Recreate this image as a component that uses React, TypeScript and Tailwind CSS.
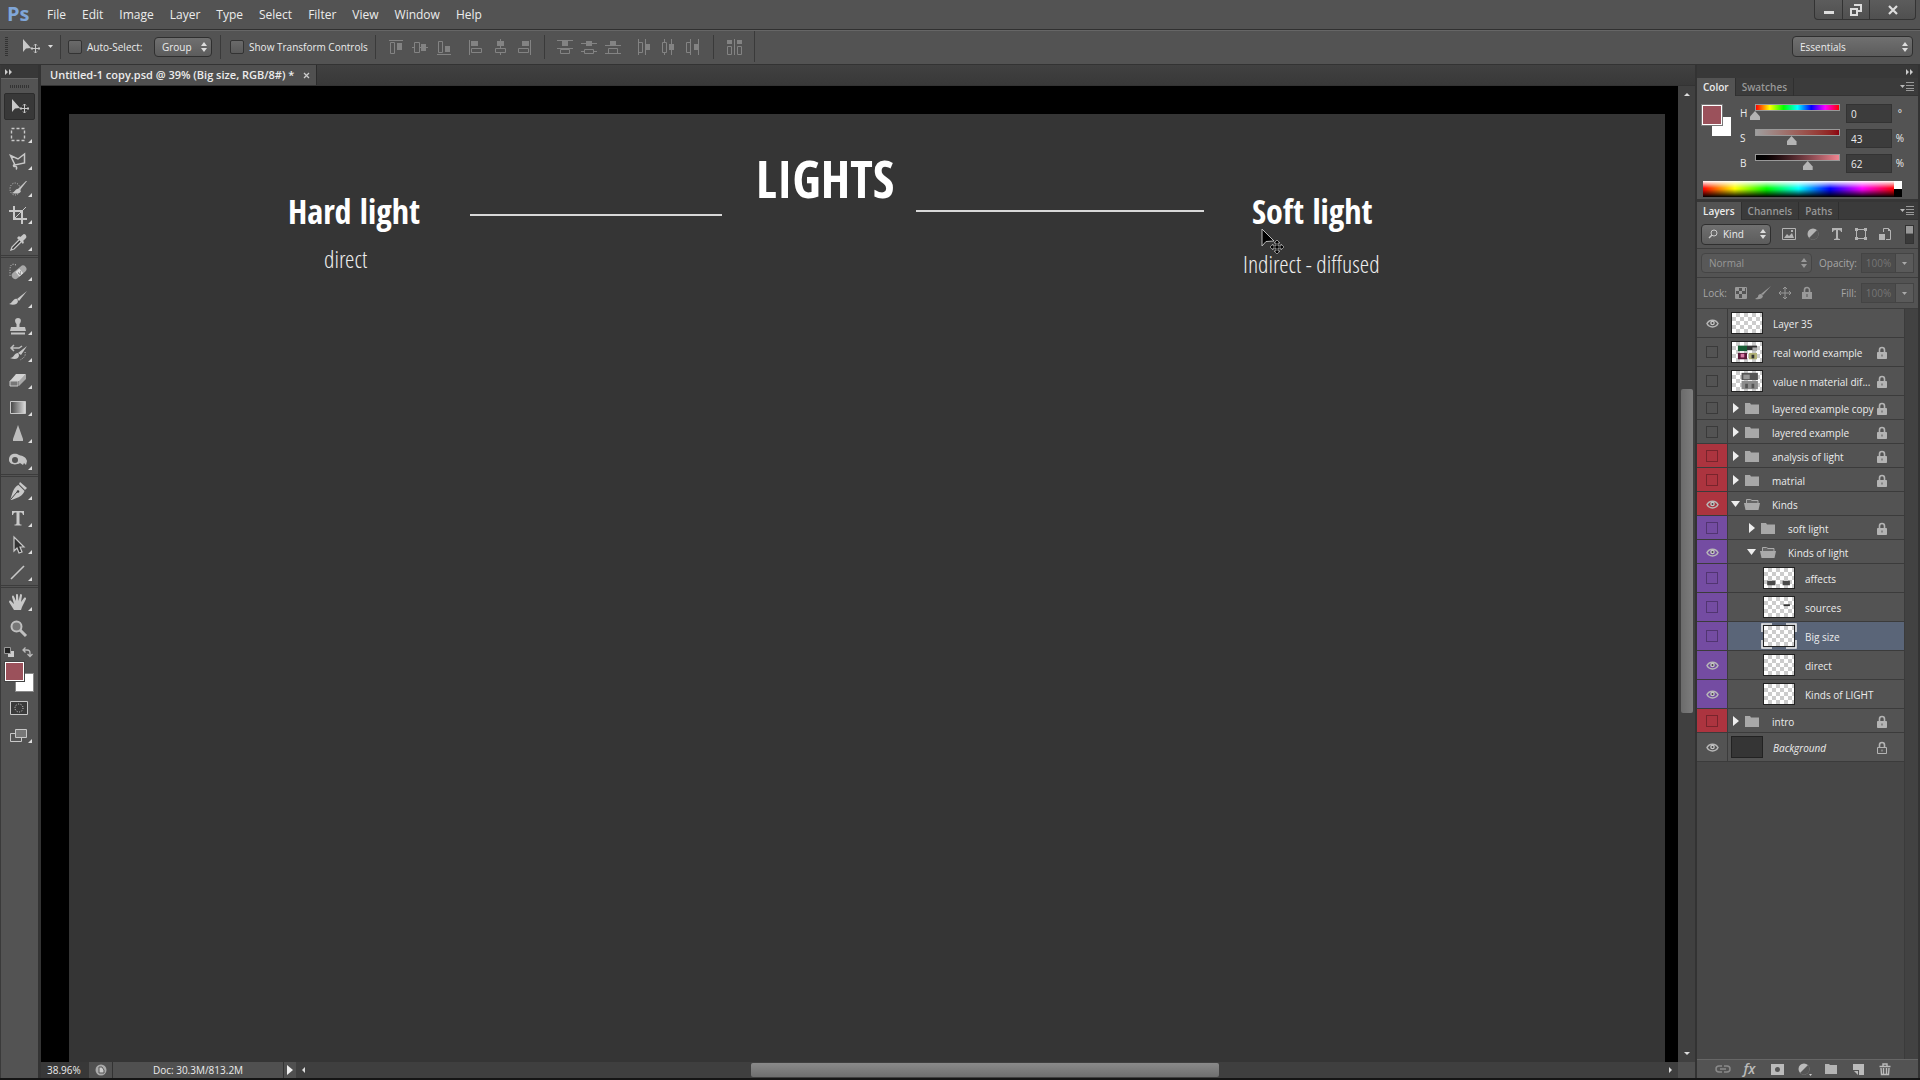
import { ReactNode } from "react";
import { clsx } from "clsx";

type LayerProps = {
  name: string;
  kind: "thumb" | "folder" | "open" | "fill";
  visible?: boolean;
  locked?: boolean;
  nested?: boolean;
  selected?: boolean;
  tag?: "red" | "violet";
  art?: ReactNode;
};

const menus = ["File", "Edit", "Image", "Layer", "Type", "Select", "Filter", "View", "Window", "Help"];

const layers: LayerProps[] = [
  { name: "Layer 35", kind: "thumb", visible: true },
  {
    name: "real world example",
    kind: "thumb",
    locked: true,
    art: (
      <>
        <path d="M5 3h10v6H5z" fill="#155c33" />
        <path d="M15 3h11v5H15z" fill="#333" />
        <path d="M21 5h5v4h-5z" fill="#aaa" />
        <path d="M5 11h10v7H5z" fill="#5b1838" />
        <path d="M8 12h4v4H8z" fill="#d77aa5" />
        <path d="M17 11h9v7h-9z" fill="#b3b277" />
        <path d="M20 13h3v4h-3z" fill="#333" />
      </>
    ),
  },
  {
    name: "value n material dif...",
    kind: "thumb",
    locked: true,
    art: (
      <>
        <path d="M9 1h18v8H9z" fill="#555" />
        <path d="M11 3h7v5h-7z" fill="#999" />
        <path d="M9 10h18v9H9z" fill="#8c8c8c" />
        <path d="M13 13h3v5h-3zM20 13h3v5h-3z" fill="#555" />
      </>
    ),
  },
  { name: "layered example copy", kind: "folder", locked: true },
  { name: "layered example", kind: "folder", locked: true },
  { name: "analysis of light", kind: "folder", locked: true, tag: "red" },
  { name: "matrial", kind: "folder", locked: true, tag: "red" },
  { name: "Kinds", kind: "open", visible: true, tag: "red" },
  { name: "soft light", kind: "folder", locked: true, nested: true, tag: "violet" },
  { name: "Kinds of light", kind: "open", visible: true, nested: true, tag: "violet" },
  {
    name: "affects",
    kind: "thumb",
    nested: true,
    tag: "violet",
    art: <path d="M2 13h9v5H2zM19 13h8v5h-8z" fill="#4a4a4a" />,
  },
  {
    name: "sources",
    kind: "thumb",
    nested: true,
    tag: "violet",
    art: <path d="M20 7h7v2h-7z" fill="#333" />,
  },
  { name: "Big size", kind: "thumb", nested: true, tag: "violet", selected: true },
  { name: "direct", kind: "thumb", visible: true, nested: true, tag: "violet" },
  { name: "Kinds of LIGHT", kind: "thumb", visible: true, nested: true, tag: "violet" },
  { name: "intro", kind: "folder", locked: true, tag: "red" },
  { name: "Background", kind: "fill", visible: true, locked: true },
];

// every tool glyph lives in a 20x20 box
const tools: Record<string, ReactNode> = {
  Move: (
    <>
      <path d="M3 2v13l3-3.5L11 11z" fill="#c8c8c8" />
      <path d="M15.500 7v9M11 11.500h9M14 8.500l1.500-1.500 1.500 1.500M14 14.500l1.500 1.500 1.500-1.500M12.500 10L11 11.500l1.500 1.500M18.500 10l1.500 1.500-1.500 1.500" stroke="#c8c8c8" fill="none" />
    </>
  ),
  Marquee: <path d="M3.500 4.500h13v12h-13z" stroke="#c8c8c8" fill="none" strokeDasharray="3 2" strokeWidth="1.400" />,
  Lasso: (
    <path d="M2.500 4.500L10 8l6.500-5v9L7 14zM7 14c-2-1-2 2 0 1.500s2 2 1 3" stroke="#c8c8c8" fill="none" strokeWidth="1.500" />
  ),
  "Quick Selection": (
    <>
      <ellipse cx="7" cy="11" rx="5" ry="6" stroke="#c8c8c8" fill="none" strokeDasharray="1 1.500" />
      <path d="M19 3l-7 9-2-1 8-8z" fill="#c8c8c8" />
      <path d="M11 11c-3-1-4 3-7 4 4 1 8 1 9-2z" fill="#c8c8c8" />
    </>
  ),
  Crop: (
    <>
      <path d="M6 1v13h13M1 6h13v13" stroke="#c8c8c8" fill="none" strokeWidth="2" />
      <path d="M6 14L18 2" stroke="#c8c8c8" />
    </>
  ),
  Eyedropper: (
    <>
      <path d="M11 8l-7 7-1 3 3-1 7-7" stroke="#c8c8c8" fill="#333" strokeWidth="1.300" />
      <path d="M9 6l6 6 1-2-1-1 3-3c1-1 0-4-2-4-1 0-3 3-4 3l-1-1z" fill="#c8c8c8" />
    </>
  ),
  "Healing Brush": (
    <>
      <path d="M8 3c-4-2-6 0-6 5v6" stroke="#c8c8c8" fill="none" strokeDasharray="1 1.500" />
      <rect x="3" y="7" width="17" height="7" rx="3.500" transform="rotate(-40 11 11)" fill="#a8a8a8" />
      <rect x="9" y="8" width="5" height="6" transform="rotate(-40 11 11)" fill="#ddd" />
      <path d="M10 11h1M12 10h1M11 12h1M12 12h1" stroke="#666" />
    </>
  ),
  Brush: (
    <>
      <path d="M19 2l-8 10-2-2z" fill="#c8c8c8" />
      <path d="M9 10c-4-1-4 4-8 5 5 2 9 0 9-3z" fill="#c8c8c8" />
    </>
  ),
  "Clone Stamp": (
    <path d="M8.500 8C6 5 7 2 10 2s4 3 1.500 6v3H17l1 4H2l1-4h5.500zM3 16.500h14v2H3z" fill="#c4c4c4" />
  ),
  "History Brush": (
    <>
      <path d="M3 5h8l3-2M6 2L3 5l3 3" stroke="#bdbdbd" fill="none" strokeWidth="1.500" />
      <path d="M19 3l-6 9-3-2z" fill="#c8c8c8" />
      <path d="M10 10c-4 0-4 5-8 5 5 2 9 1 9-3z" fill="#c8c8c8" />
      <path d="M17 9c1 4-1 6-5 8" stroke="#c8c8c8" fill="none" strokeDasharray="1 1.500" />
    </>
  ),
  Eraser: (
    <>
      <path d="M2 11l6-7h10l-6 7z" fill="#d2d2d2" />
      <path d="M2 11v5h8v-5z" fill="#777" stroke="#c8c8c8" />
      <path d="M11 11l7-7v5l-7 7z" fill="#a8a8a8" />
    </>
  ),
  Gradient: (
    <>
      <defs>
        <linearGradient id="toolGradient">
          <stop stopColor="#444" />
          <stop offset="1" stopColor="#ddd" />
        </linearGradient>
      </defs>
      <path d="M2.500 4.500h15v12h-15z" fill="url(#toolGradient)" stroke="#c8c8c8" />
    </>
  ),
  Sharpen: <path d="M10 1l5 14v2H5v-2z" fill="#bdbdbd" />,
  Dodge: (
    <path
      fillRule="evenodd"
      d="M1 9c0-7 7-7 10-5 4 1 7 2 8 6l-1 4-2-2-1 2-3-2c-5 3-11 1-11-3zm3 0a3 3 0 006 0 3 3 0 00-6 0z"
      fill="#c4c4c4"
    />
  ),
  Pen: (
    <>
      <path d="M12 1l7 6-2 2-6-6z" fill="#c8c8c8" />
      <path d="M10.500 4l6 6c-2 5-5 6-13 9l-1-1C5 10 6 6 10.500 4z" fill="#c8c8c8" />
      <path d="M3 18l6-7" stroke="#444" />
      <circle cx="10" cy="10.500" r="1.300" fill="#444" />
    </>
  ),
  Type: <path d="M4 3h12v4h-1c-.5-2-1-2.500-3.500-2.500V15c0 1 .5 1.500 2 1.500v1h-7v-1c1.500 0 2-.5 2-1.500V4.500C6 4.500 5.500 5 5 7H4z" fill="#c8c8c8" />,
  "Path Selection": <path d="M6 2v14l3-3 2 5 3-1-2-5h4z" fill="#333" stroke="#c8c8c8" strokeWidth="1.200" />,
  Line: <path d="M3 17L16 4" stroke="#c8c8c8" strokeWidth="1.600" />,
  Hand: (
    <path
      d="M6 18L1 10c0-1 1-2 2-1l3 3-2-7c0-1.500 1.500-2 2-.5L8 9V3c0-1.500 2-1.500 2 0l.5 6L12 3c0-1.500 2-1 2 .5L13 10l3-4c1-1 2.500 0 2 1l-4 8-1 3z"
      fill="#c8c8c8"
    />
  ),
  Zoom: (
    <>
      <circle cx="8.500" cy="7.500" r="5" fill="#777" stroke="#c0c0c0" strokeWidth="2" />
      <path d="M12 11l6 6" stroke="#c0c0c0" strokeWidth="3" />
    </>
  ),
};

const toolGroups = [
  ["Move", "Marquee", "Lasso", "Quick Selection", "Crop", "Eyedropper"],
  ["Healing Brush", "Brush", "Clone Stamp", "History Brush", "Eraser", "Gradient", "Sharpen", "Dodge"],
  ["Pen", "Type", "Path Selection", "Line"],
  ["Hand", "Zoom"],
];

// 16x16 alignment and distribution glyphs
const alignGroups = [
  [
    ["Align top edges", "M1 1.500h14M2.500 3.500h4v11h-4z", "M9 4h5v7H9z"],
    ["Align vertical centers", "M0 8.500h2M2.500 3.500h5v10h-5zM7 8.500h9", "M9 5h5v7H9z"],
    ["Align bottom edges", "M1 15.500h14M2.500 2.500h4v11h-4z", "M9 7h5v6H9z"],
  ],
  [
    ["Align left edges", "M1.500 1v15M3.500 9.500h10v4h-10z", "M3 2h7v5H3z"],
    ["Align horizontal centers", "M8.500 0v2M8.500 7v2M3.500 9.500h10v4h-10zM8.500 14v2", "M5 2h7v5H5z"],
    ["Align right edges", "M14.500 1v15M2.500 9.500h10v4h-10z", "M6 2h7v5H6z"],
  ],
  [
    ["Distribute top edges", "M0 1.500h16M0 9.500h16M3.500 10.500h9v4h-9z", "M5 2h6v5H5z"],
    ["Distribute vertical centers", "M0 4.500h16M0 12.500h4M12 12.500h4M3.500 10.500h9v4h-9z", "M5 2h6v5H5z"],
    ["Distribute bottom edges", "M0 6.500h16M0 14.500h16M3.500 9.500h9v5h-9z", "M5 2h6v5H5z"],
  ],
  [
    ["Distribute left edges", "M1.500 0v16M8.500 0v16M1.500 3.500h4v10h-4z", "M9 5h4v6H9z"],
    ["Distribute horizontal centers", "M3.500 0v3M3.500 13v3M1.500 3.500h4v10h-4zM10.500 0v16", "M8 5h5v6H8z"],
    ["Distribute right edges", "M5.500 0v16M13.500 0v16M1.500 3.500h4v10h-4z", "M9 5h4v6H9z"],
  ],
  [["Auto-align layers", "M8.500 0v16M1.500 7.500h4v8h-4zM11.500 7.500h4v8h-4z", "M1 1h5v4H1zM11 1h5v4h-5z"]],
];

const Eye = () => (
  <svg width="13" height="10" viewBox="0 0 13 10">
    <path d="M1 5.500C3 1 10 1 12 5.500 10 10 3 10 1 5.500z" fill="none" stroke="#b8b8b8" strokeWidth="1.500" />
    <circle cx="6.500" cy="5" r="2.300" fill="#c8c8c8" />
    <circle cx="6.500" cy="5" r="1" fill="#444" />
  </svg>
);

const Lock = ({ hollow = false }: { hollow?: boolean }) => (
  <svg width="12" height="14" viewBox="0 0 12 14" className="mt-0.5 shrink-0">
    <path d="M3.500 7V4a2.500 2.500 0 015 0v3" fill="none" stroke="#b4b4b4" strokeWidth="1.600" />
    <path d="M1.500 6.500h9v6h-9z" fill={hollow ? "#555" : "#b4b4b4"} stroke="#b4b4b4" />
    <path d="M5.500 8.500h1v2h-1z" fill={hollow ? "#b4b4b4" : "#555"} />
  </svg>
);

const Folder = ({ open = false }: { open?: boolean }) => (
  <svg width="18" height="14" viewBox="0 0 18 14" className="shrink-0">
    {open ? (
      <>
        <path d="M3.500 6V2.500h4l1.500 1h6V6" fill="#666" stroke="#aaa" />
        <path d="M1 6h16l-1.500 7h-13z" fill="#aaa" />
      </>
    ) : (
      <path d="M2 2h5l1 1.500h8V13H2z" fill="#a8a8a8" />
    )}
  </svg>
);

const UpDown = ({ dim = false }: { dim?: boolean }) => (
  <svg width="6" height="10" viewBox="0 0 6 10" className="pointer-events-none shrink-0">
    <path d="M3 0l3 4H0zM3 10l3-4H0z" fill={dim ? "#999" : "#ddd"} />
  </svg>
);

const PanelMenu = () => (
  <button aria-label="Panel menu" className="mr-1 ml-auto flex items-center">
    <svg width="14" height="9" viewBox="0 0 14 9">
      <path d="M0 3h5L2.500 6z" fill="#bbb" />
      <path d="M6 .5h8M6 3.500h8M6 6.500h8" stroke="#999" />
      <path d="M6 8.500h8" stroke="#999" />
    </svg>
  </button>
);

const DoubleArrow = () => (
  <svg width="8" height="6" viewBox="0 0 8 6">
    <path d="M0 0l3 3-3 3zM4 0l3 3-3 3z" fill="#ccc" />
  </svg>
);

type DropProps = { label: string; value: string; className: string; dim?: boolean; icon?: ReactNode };

const Drop = ({ label, value, className, dim, icon }: DropProps) => (
  <div
    className={clsx(
      "flex items-center rounded-sm border pr-1",
      dim ? "border-[#454545] bg-[#585858] text-[#999]" : "border-[#2f2f2f] bg-linear-to-b from-[#707070] to-[#5c5c5c]",
      className
    )}
  >
    {icon}
    <select aria-label={label} className="h-full min-w-0 flex-1 appearance-none bg-transparent outline-none">
      <option>{value}</option>
    </select>
    <UpDown dim={dim} />
  </div>
);

const Percent = ({ label, width }: { label: string; width: string }) => (
  <label className="flex items-center text-[#a6a6a6]">
    <span className={width}>{label}</span>
    <input
      defaultValue="100%"
      className="h-5 w-[35px] border border-[#444] bg-[#4c4c4c] text-center text-[#757575] outline-none"
    />
    <span className="flex h-5 w-[18px] items-center justify-center border border-l-0 border-[#444] bg-[#5a5a5a]">
      <svg width="5" height="3" viewBox="0 0 5 3">
        <path d="M0 0h5L2.500 3z" fill="#aaa" />
      </svg>
    </span>
  </label>
);

const Separator = () => <div className="h-6 w-px shrink-0 bg-[#3a3a3a]" />;

const MenuBar = () => (
  <header className="flex h-[30px] shrink-0 items-start border-b border-[#303030]">
    <span className="ml-[7px] w-8 text-[20px] leading-7 font-bold text-[#80a6d8]">Ps</span>
    <nav className="flex h-[29px] items-center text-[12px]">
      {menus.map((menu) => (
        <button key={menu} className="px-2">
          {menu}
        </button>
      ))}
    </nav>
    <div className="mr-1 ml-auto flex h-5 w-[102px] divide-x divide-[#333] rounded-b border border-t-0 border-[#333] bg-linear-to-b from-[#5c5c5c] to-[#505050]">
      <button aria-label="Minimize" className="flex w-7 items-center justify-center">
        <svg width="12" height="10" viewBox="0 0 12 10">
          <path d="M1 6h10v3H1z" fill="#ddd" />
        </svg>
      </button>
      <button aria-label="Restore" className="flex w-[27px] items-center justify-center">
        <svg width="12" height="12" viewBox="0 0 12 12">
          <path d="M4 1h7v6H8M1 5h6v6H1z" fill="none" stroke="#ddd" strokeWidth="2" />
        </svg>
      </button>
      <button aria-label="Close" className="flex flex-1 items-center justify-center">
        <svg width="10" height="10" viewBox="0 0 10 10">
          <path d="M1 1l8 8M9 1L1 9" stroke="#ddd" strokeWidth="2.200" />
        </svg>
      </button>
    </div>
  </header>
);

const Check = ({ label }: { label: string }) => (
  <label className="flex items-center gap-[5px] whitespace-nowrap">
    <input
      type="checkbox"
      className="size-[14px] appearance-none rounded-xs border border-[#333] bg-linear-to-b from-[#6a6a6a] to-[#5a5a5a]"
    />
    {label}
  </label>
);

const AlignGroup = ({ items }: { items: string[][] }) => (
  <div className="flex">
    {items.map(([label, lines, solid]) => (
      <button key={label} aria-label={label} className="flex w-6 justify-center">
        <svg width="16" height="16" viewBox="0 0 16 16">
          <path d={lines} fill="none" stroke="#838383" />
          <path d={solid} fill="#838383" />
        </svg>
      </button>
    ))}
  </div>
);

const OptionsBar = () => (
  <div className="flex h-[35px] shrink-0 items-center border-t border-b border-t-[#666] border-b-[#333] pb-0.5 pl-[5px]">
    <div className="h-5 w-[3px] bg-[repeating-linear-gradient(#333_0_1px,#535353_1px_2px)]" />
    <button aria-label="Current tool" className="ml-3 flex w-10 items-center gap-2">
      <svg width="20" height="20" viewBox="0 0 20 20">
        {tools.Move}
      </svg>
      <svg width="5" height="3" viewBox="0 0 5 3">
        <path d="M0 0h5L2.500 3z" fill="#ddd" />
      </svg>
    </button>
    <Separator />
    <div className="ml-[7px] w-[86px]">
      <Check label="Auto-Select:" />
    </div>
    <Drop label="Auto-select target" value="Group" className="mr-2 h-5 w-[58px] pl-[7px]" />
    <Separator />
    <div className="ml-[9px] w-[145px]">
      <Check label="Show Transform Controls" />
    </div>
    <Separator />
    <div className="flex gap-2 px-2">
      <AlignGroup items={alignGroups[0]} />
      <AlignGroup items={alignGroups[1]} />
    </div>
    <Separator />
    <div className="flex gap-2 px-2">
      <AlignGroup items={alignGroups[2]} />
      <AlignGroup items={alignGroups[3]} />
    </div>
    <Separator />
    <div className="flex h-full items-center border-r border-[#3a3a3a] px-2">
      <AlignGroup items={alignGroups[4]} />
    </div>
    <Drop label="Workspace" value="Essentials" className="mr-[7px] ml-auto h-[21px] w-[121px] pl-[7px]" />
  </div>
);

const Toolbar = () => (
  <aside className="flex w-[41px] shrink-0 flex-col border-r-3 border-l border-r-[#333] border-l-[#3a3a3a]">
    <div className="flex h-[13px] items-center bg-[#383838] pl-1">
      <DoubleArrow />
    </div>
    <div className="flex h-[15px] items-center justify-center border-t border-[#666]">
      <div className="h-[3px] w-5 bg-[repeating-linear-gradient(90deg,#333_0_1px,#535353_1px_2px)]" />
    </div>
    {toolGroups.map((group, i) => (
      <div key={i} className={clsx("flex flex-col px-[3px]", i > 0 && "border-t-3 border-double border-[#3c3c3c]")}>
        {group.map((tool) => (
          <button
            key={tool}
            aria-label={tool}
            className={clsx(
              "flex h-[27px] items-center pl-1",
              tool === "Move" && "rounded-xs border border-[#2c2c2c] bg-[#383838]"
            )}
          >
            <svg width="20" height="20" viewBox="0 0 20 20">
              {tools[tool]}
            </svg>
            {tool !== "Move" && tool !== "Zoom" && (
              <svg width="4" height="4" viewBox="0 0 4 4" className="mb-1 self-end">
                <path d="M4 0v4H0z" fill="#ddd" />
              </svg>
            )}
          </button>
        ))}
      </div>
    ))}
    <div className="flex h-5 items-center gap-2 pl-[3px]">
      <button aria-label="Default colors">
        <svg width="10" height="10" viewBox="0 0 10 10">
          <path d="M4 4h6v6H4z" fill="#ccc" />
          <path d="M.5 .5h6v6h-6z" fill="#222" stroke="#999" />
        </svg>
      </button>
      <button aria-label="Switch colors">
        <svg width="11" height="11" viewBox="0 0 11 11">
          <path d="M1 3h4q3 0 3 3v3M3.500 .5L1 3l2.500 2.500M5.500 7L8 9.500 10.500 7" fill="none" stroke="#bbb" strokeWidth="1.300" />
        </svg>
      </button>
    </div>
    <div className="ml-1 grid h-[30px] w-[29px] grid-cols-1 grid-rows-1">
      <button aria-label="Background color" className="col-start-1 row-start-1 size-[19px] self-end justify-self-end border border-[#888] bg-white" />
      <button aria-label="Foreground color" className="col-start-1 row-start-1 size-[19px] border border-white bg-[#9b515b] outline outline-[#444]" />
    </div>
    <button aria-label="Quick mask" className="mt-[9px] ml-[9px]">
      <svg width="18" height="14" viewBox="0 0 18 14">
        <path d="M.5 .5h17v13H.5z" fill="#3a3a3a" stroke="#c8c8c8" />
        <circle cx="9" cy="7" r="4" fill="none" stroke="#ddd" strokeDasharray="1 1.500" />
      </svg>
    </button>
    <button aria-label="Screen mode" className="mt-[13px] ml-[9px] flex items-end">
      <svg width="18" height="15" viewBox="0 0 18 15">
        <path d="M.5 5.500h11v8H.5z" fill="#555" stroke="#c8c8c8" />
        <path d="M5.500 1.500h11v8h-11z" fill="#777" stroke="#c8c8c8" />
      </svg>
      <svg width="4" height="4" viewBox="0 0 4 4">
        <path d="M4 0v4H0z" fill="#ddd" />
      </svg>
    </button>
  </aside>
);

const Caption = ({ children, className }: { children: string; className: string }) => (
  <p
    className={clsx(
      "absolute font-['Open_Sans_Condensed_Light','Roboto_Condensed_Light','Roboto_Condensed',sans-serif] text-[24px] leading-[30px] font-light text-[#eee]",
      className
    )}
  >
    {children}
  </p>
);

const Canvas = () => (
  <main className="relative min-w-0 flex-1 overflow-hidden border-t-[28px] border-r-[13px] border-l-[28px] border-black bg-[#353535] font-['Open_Sans_Condensed','Roboto_Condensed',sans-serif] whitespace-nowrap text-white">
    <h1 className="absolute top-[32px] left-[687px] text-[52px] leading-[64px] font-bold">LIGHTS</h1>
    <h2 className="absolute top-[75px] left-[219px] text-[34px] leading-[44px] font-bold">Hard light</h2>
    <Caption className="top-[130px] left-[255px]">direct</Caption>
    <div className="absolute top-[100px] left-[401px] h-[2px] w-[252px] bg-[#d8d8d8]" />
    <div className="absolute top-[96px] left-[847px] h-[2px] w-[288px] bg-[#d8d8d8]" />
    <h2 className="absolute top-[75px] left-[1183px] text-[34px] leading-[44px] font-bold">Soft light</h2>
    <Caption className="top-[135px] left-[1174px]">Indirect - diffused</Caption>
    <svg className="absolute top-[114px] left-[1192px]" width="24" height="28" viewBox="0 0 24 28">
      <path d="M1 1v17l4-4.500L13 13z" fill="#000" stroke="#bbb" />
      <path d="M16 12l3 3h-2v3h3v-2l3 3-3 3v-2h-3v3h2l-3 3-3-3h2v-3h-3v2l-3-3 3-3v2h3v-3h-2z" fill="#000" stroke="#bbb" strokeWidth=".7" />
    </svg>
  </main>
);

const ScrollArrow = ({ d, label }: { d: string; label: string }) => (
  <button aria-label={label} className="flex size-4 shrink-0 items-center justify-center">
    <svg width="6" height="6" viewBox="0 0 6 6">
      <path d={d} fill="#ddd" />
    </svg>
  </button>
);

const Document = () => (
  <section className="flex min-w-0 flex-1 flex-col">
    <div className="flex h-[21px] shrink-0 border-b border-[#333] bg-linear-to-b from-[#414141] to-[#383838]">
      <div className="flex w-[276px] items-center justify-between border-r border-[#2c2c2c] bg-[#505050] pr-[6px] pl-[9px] text-[11px] font-semibold whitespace-nowrap">
        Untitled-1 copy.psd @ 39% (Big size, RGB/8#) *
        <button aria-label="Close document">
          <svg width="7" height="7" viewBox="0 0 7 7">
            <path d="M1 1l5 5M6 1L1 6" stroke="#ccc" strokeWidth="1.300" />
          </svg>
        </button>
      </div>
    </div>
    <div className="flex min-h-0 flex-1">
      <Canvas />
      <div className="flex w-[17px] shrink-0 flex-col items-center bg-[#404040]">
        <ScrollArrow label="Scroll up" d="M0 5h6L3 2z" />
        <div className="flex w-3 flex-1 flex-col">
          <div className="basis-[30.400%]" />
          <div className="basis-[34.300%] rounded-xs bg-linear-to-r from-[#6b6b6b] to-[#7d7d7d]" />
        </div>
        <ScrollArrow label="Scroll down" d="M0 1h6L3 4z" />
      </div>
    </div>
    <div className="flex h-4 shrink-0 items-center bg-[#3f3f3f]">
      <input
        aria-label="Zoom level"
        defaultValue="38.96%"
        className="h-full w-12 bg-[#383838] pl-[6px] outline-none"
      />
      <div className="flex h-full w-6 items-center justify-center border-r border-[#333] bg-[#505050]">
        <svg width="12" height="12" viewBox="0 0 12 12">
          <circle cx="6" cy="6" r="5.500" fill="#aaa" />
          <path d="M4 3h3l2 3v3H4z" fill="#ccc" stroke="#555" />
        </svg>
      </div>
      <span className="h-full w-[170px] bg-[#505050] text-center">Doc: 30.3M/813.2M</span>
      <button aria-label="Status options" className="flex h-full w-[13px] items-center justify-center border-l border-[#333] bg-[#505050]">
        <svg width="6" height="10" viewBox="0 0 6 10">
          <path d="M0 0l6 5-6 5z" fill="#eee" />
        </svg>
      </button>
      <ScrollArrow label="Scroll left" d="M4 0v6L1 3z" />
      <div className="flex h-[14px] flex-1">
        <div className="basis-[32.500%]" />
        <div className="basis-[34.700%] rounded-xs bg-linear-to-b from-[#8a8a8a] to-[#6e6e6e]" />
      </div>
      <ScrollArrow label="Scroll right" d="M2 0v6l3-3z" />
      <div className="h-full w-[17px] bg-[#505050]" />
    </div>
  </section>
);

type ChannelProps = { name: string; unit: string; value: number; max: number; track: string };

const channels: ChannelProps[] = [
  {
    name: "H",
    unit: "°",
    value: 0,
    max: 360,
    track: "bg-[linear-gradient(90deg,#f00,#ff0,#0f0,#0ff,#00f,#f0f,#f00)]",
  },
  { name: "S", unit: "%", value: 43, max: 100, track: "bg-linear-to-r from-[#9e9e9e] to-[#8c0010]" },
  { name: "B", unit: "%", value: 62, max: 100, track: "bg-linear-to-r from-black to-[#f08490]" },
];

const Channel = ({ name, unit, value, max, track }: ChannelProps) => (
  <div className="flex h-[25px] items-start">
    <span className="w-[15px] pt-px">{name}</span>
    <div className="flex w-[85px] flex-col">
      <div className={clsx("h-[7px] border border-[#999]", track)} />
      <input
        type="range"
        aria-label={name}
        max={max}
        defaultValue={value}
        className="-mx-[5px] h-[9px] w-[95px] appearance-none bg-transparent [&::-webkit-slider-thumb]:h-[9px] [&::-webkit-slider-thumb]:w-[10px] [&::-webkit-slider-thumb]:appearance-none [&::-webkit-slider-thumb]:bg-[#b4b4b4] [&::-webkit-slider-thumb]:[clip-path:polygon(50%_0,100%_60%,100%_100%,0_100%,0_60%)]"
      />
    </div>
    <input
      aria-label={`${name} value`}
      defaultValue={value}
      className="ml-[6px] h-[19px] w-[46px] border border-[#333] bg-[#3c3c3c] pl-1 outline-none"
    />
    <span className="w-4 pt-px text-center">{unit}</span>
  </div>
);

const Tabs = ({ names }: { names: string[] }) => (
  <div role="tablist" className="flex h-[18px] shrink-0 border-b border-[#333] bg-[#3b3b3b] font-semibold">
    {names.map((name, i) => (
      <button
        key={name}
        role="tab"
        aria-selected={i === 0}
        className={clsx(
          "h-[18px] border-r border-[#2f2f2f] px-[6px]",
          i === 0 ? "bg-[#535353]" : "text-[#989898]"
        )}
      >
        {name}
      </button>
    ))}
    <PanelMenu />
  </div>
);

const ColorPanel = () => (
  <div className="flex h-[124px] shrink-0 flex-col border-b-3 border-[#363636]">
    <Tabs names={["Color", "Swatches"]} />
    <div className="flex pt-2 pl-[5px]">
      <div className="mt-px mr-[9px] grid h-[31px] w-[29px]">
        <button aria-label="Background swatch" className="col-start-1 row-start-1 size-[19px] self-end justify-self-end bg-white" />
        <button aria-label="Foreground swatch" className="col-start-1 row-start-1 size-5 border border-white bg-[#9b515b] outline outline-[#777]" />
      </div>
      <div>
        {channels.map((channel) => (
          <Channel key={channel.name} {...channel} />
        ))}
      </div>
    </div>
    <div className="mx-[6px] mt-0.5 flex h-4 w-[199px]">
      <div className="flex-1 bg-[linear-gradient(#fff,#fff0_45%,#0000_50%,#000),linear-gradient(90deg,#f00,#ff0,#0f0,#0ff,#00f,#f0f,#f00)]" />
      <div className="w-2 bg-linear-to-b from-white from-50% to-black to-50%" />
    </div>
  </div>
);

const Layer = ({ name, kind, visible, locked, nested, selected, tag, art }: LayerProps) => {
  const group = kind === "folder" || kind === "open";
  return (
    <li className={clsx("flex border-b border-[#3b3b3b]", group ? "h-6" : "h-[29px]")}>
      <button
        aria-label={`Toggle ${name}`}
        className={clsx(
          "flex w-[31px] shrink-0 items-center justify-center border-r border-[#3b3b3b]",
          tag === "red" && "bg-[#ac343f]",
          tag === "violet" && "bg-[#744ca2]"
        )}
      >
        {visible ? <Eye /> : <span className="size-3 border border-black/30" />}
      </button>
      <div
        className={clsx(
          "flex min-w-0 flex-1 items-center pr-4",
          nested ? "pl-[19px]" : "pl-[3px]",
          selected && "bg-[#5a6578]"
        )}
      >
        {group ? (
          <>
            <svg width="12" height="10" viewBox="0 0 12 10" className="shrink-0">
              <path d={kind === "open" ? "M0 2h9L4.500 8z" : "M2 0l6 5-6 5z"} fill="#eee" />
            </svg>
            <Folder open={kind === "open"} />
            <span className="w-[11px] shrink-0" />
          </>
        ) : (
          <span className={clsx("relative mr-[10px] flex shrink-0", nested && "ml-4")}>
            <svg
              width="32"
              height="22"
              viewBox="-1 -1 32 22"
              className={clsx(
                "border border-[#222]",
                kind === "fill"
                  ? "bg-[#353535]"
                  : "bg-white bg-[repeating-conic-gradient(#ccc_0_25%,#fff_0_50%)] bg-size-[8px_8px]"
              )}
            >
              {art}
            </svg>
            {selected && (
              <svg width="36" height="26" viewBox="0 0 36 26" className="absolute -top-0.5 -left-0.5">
                <path
                  d="M11 1H1v8M25 1h10v8M1 17v8h10M35 17v8H25"
                  fill="none"
                  stroke="#eee"
                  strokeWidth="1.500"
                />
              </svg>
            )}
          </span>
        )}
        <span className={clsx("flex-1 truncate pt-0.5", kind === "fill" && "italic")}>{name}</span>
        {locked && <Lock hollow={kind === "fill"} />}
      </div>
    </li>
  );
};

const filters: [string, ReactNode][] = [
  ["Pixel layers", <><path d="M1.500 2.500h13v11h-13z" fill="none" stroke="#b4b4b4" /><path d="M3 12l3-4 2 2 3-3 2 5z" fill="#b4b4b4" /><path d="M10 4h2v2h-2z" fill="#b4b4b4" /></>],
  ["Adjustment layers", <><circle cx="8" cy="8" r="5.500" fill="#b4b4b4" /><path d="M12 4a5 5 0 01-8 8z" fill="#555" /></>],
  ["Type layers", <path d="M3 2h10v4h-1q0-2-3-2v8q0 1 2 1v1H5v-1q2 0 2-1V4Q4 4 4 6H3z" fill="#b4b4b4" />],
  ["Shape layers", <><path d="M3.500 3.500h9v9h-9z" fill="none" stroke="#b4b4b4" /><path d="M2 2h3v3H2zM11 2h3v3h-3zM2 11h3v3H2zM11 11h3v3h-3z" fill="#b4b4b4" /></>],
  ["Smart objects", <><path d="M6.500 6V2.500h5l2 2v9H9" fill="none" stroke="#b4b4b4" /><path d="M2 8h6v6H2zM11 2v3h3z" fill="#b4b4b4" /></>],
];

const locks: [string, ReactNode][] = [
  ["Lock transparency", <><path d="M2.500 2.500h11v11h-11z" fill="none" stroke="#999" /><path d="M3 3h3v3H3zM9 3h3v3H9zM6 6h3v3H6zM3 9h3v4H3zM9 9h4v4H9z" fill="#999" /></>],
  ["Lock pixels", <path d="M16 1L8 10 6 9zM6 9q-3 0-3 3l-3 2q7 1 8-3z" fill="#999" />],
  ["Lock position", <path d="M8 2v12M2 8h12M6 4l2-2 2 2M6 12l2 2 2-2M4 6L2 8l2 2M12 6l2 2-2 2" fill="none" stroke="#999" />],
  ["Lock all", <><path d="M5.500 8V5a2.500 2.500 0 015 0v3" fill="none" stroke="#999" strokeWidth="1.600" /><path d="M3 7h10v7H3z" fill="#999" /><path d="M7.500 9h1v3h-1z" fill="#555" /></>],
];

const actions: [string, ReactNode][] = [
  ["Link layers", <path d="M7 5H4a3 3 0 000 6h3M9 5h3a3 3 0 010 6H9M5 8h6" fill="none" stroke="#8a8a8a" strokeWidth="1.500" />],
  ["Layer style", null],
  ["Add mask", <><path d="M2 3h13v11H2z" fill="#bbb" /><circle cx="8.500" cy="8.500" r="2.500" fill="#555" /></>],
  ["New adjustment", <><circle cx="8" cy="8" r="5.500" fill="#bbb" /><path d="M12 4a5 5 0 01-8 8z" fill="#555" /><path d="M13 13h3l-1.500 2z" fill="#ccc" /></>],
  ["New group", <path d="M2 3h4l1 1h7v9H2z" fill="#b4b4b4" />],
  ["New layer", <><path d="M3 3h11v11H9V9H3z" fill="#bbb" /><path d="M4 10h4v4z" fill="#bbb" /></>],
  ["Delete layer", <path d="M2.500 5.500h11M6 5V3h4v2M4 7l.5 6.500h7L12 7M6.500 7v6M9.500 7v6" fill="none" stroke="#bbb" strokeWidth="1.400" />],
];

const LayersPanel = () => (
  <div className="flex min-h-0 flex-1 flex-col">
    <Tabs names={["Layers", "Channels", "Paths"]} />
    <div className="flex h-[29px] shrink-0 items-center border-b border-[#3d3d3d] pl-1">
      <Drop
        label="Filter kind"
        value="Kind"
        className="mr-[6px] h-[21px] w-[70px] pl-[6px]"
        icon={
          <svg width="10" height="10" viewBox="0 0 10 10" className="mr-[5px]">
            <circle cx="6" cy="4" r="3" fill="none" stroke="#ccc" />
            <path d="M4 6L1 9" stroke="#ccc" strokeWidth="1.500" />
          </svg>
        }
      />
      {filters.map(([label, icon]) => (
        <button key={label} aria-label={label} className="flex w-6 justify-center">
          <svg width="16" height="16" viewBox="0 0 16 16">
            {icon}
          </svg>
        </button>
      ))}
      <button aria-label="Toggle filtering" className="mr-1 ml-auto h-[19px] w-[9px] border border-[#333] bg-linear-to-b from-[#999] from-40% to-[#3a3a3a] to-50%" />
    </div>
    <div className="flex h-[29px] shrink-0 items-center justify-between border-b border-[#3d3d3d] px-1">
      <Drop dim label="Blend mode" value="Normal" className="h-5 w-[111px] pl-[7px]" />
      <Percent label="Opacity:" width="w-[42px]" />
    </div>
    <div className="flex h-[31px] shrink-0 items-center border-b border-[#3d3d3d] pr-1 pl-[6px]">
      <span className="w-[27px] text-[#a6a6a6]">Lock:</span>
      {locks.map(([label, icon]) => (
        <button key={label} aria-label={label} className="flex w-[22px] justify-center">
          <svg width="16" height="16" viewBox="0 0 16 16">
            {icon}
          </svg>
        </button>
      ))}
      <div className="ml-auto">
        <Percent label="Fill:" width="w-[20px]" />
      </div>
    </div>
    <div className="flex min-h-0 flex-1 bg-[#474747]">
      <ul className="min-w-0 flex-1 [&>li]:bg-[#535353]">
        {layers.map((layer) => (
          <Layer key={layer.name} {...layer} />
        ))}
      </ul>
      <div className="w-[14px] shrink-0 border-l border-[#3b3b3b] bg-[#424242]" />
    </div>
    <div className="flex h-[19px] shrink-0 items-center justify-center border-t border-[#666] pr-2">
      {actions.map(([label, icon]) => (
        <button key={label} aria-label={label} className="flex w-[27px] items-center justify-center">
          {icon ? (
            <svg width="16" height="16" viewBox="0 0 16 16">
              {icon}
            </svg>
          ) : (
            <span className="text-[14px] font-semibold text-[#bbb] italic">fx</span>
          )}
        </button>
      ))}
    </div>
  </div>
);

const Panels = () => (
  <aside className="flex w-[225px] shrink-0 flex-col border-r-2 border-l-2 border-[#333]">
    <div className="flex h-[13px] shrink-0 items-center justify-end bg-[#383838] pr-1">
      <DoubleArrow />
    </div>
    <ColorPanel />
    <LayersPanel />
  </aside>
);

export default function App() {
  return (
    <div className="flex h-screen flex-col border-b-2 border-[#151515] bg-[#535353] font-['Open_Sans',sans-serif] text-[10px] leading-4 text-[#ececec]">
      <MenuBar />
      <OptionsBar />
      <div className="flex min-h-0 flex-1">
        <Toolbar />
        <Document />
        <Panels />
      </div>
    </div>
  );
}
